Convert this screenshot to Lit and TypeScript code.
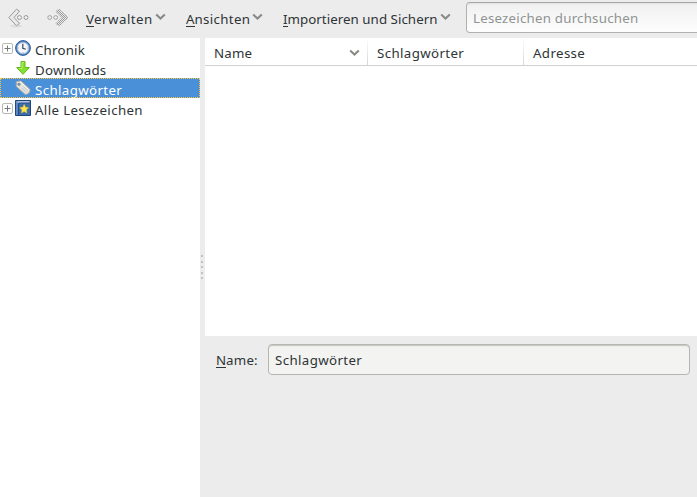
import { LitElement, html, svg, css } from "lit";
import { customElement } from "lit/decorators.js";

const chevron = html`<svg class="chevron" width="11" height="8" viewBox="0 0 11 8">
  <path d="M1.2 1.6 L5.5 5.6 L9.8 1.6" fill="none" stroke="#888a85" stroke-width="2.1" />
</svg>`;

const expander = html`<svg width="11" height="11" viewBox="0 0 11 11">
  <rect x=".5" y=".5" width="10" height="10" rx="1.5" fill="#fff" stroke="#b8b8b4" />
  <path d="M2.5 5.5h6M5.5 2.5v6" stroke="#74787a" />
</svg>`;

const clock = svg`
  <circle cx="8" cy="8" r="7.4" fill="#5b8bc8" stroke="#2f5b98" />
  <circle cx="8" cy="8" r="5.6" fill="#f6f7f8" stroke="#a9c0dd" stroke-width=".8" />
  <path d="M7.8 4v4.3l3 1" fill="none" stroke="#33455e" stroke-width="1.2" />
  <path d="M8 3v1M8 12v1M3 8h1M12 8h1" stroke="#a0a4a8" stroke-width=".8" />`;

const download = svg`
  <path d="M6 1.5h4v6h4.3L8 14.3 1.7 7.5H6z" fill="#86e02b" stroke="#62b81f" stroke-linejoin="round" />
  <path d="M7 2.5v6H4.2M7 2.5h2" fill="none" stroke="#b7f377" stroke-width=".9" />`;

const tag = svg`
  <path d="M1.4 1.6 L6 1 L14.8 9.2 Q15.6 10.8 14 12.8 Q12 14.9 10.2 14.4 L1.2 6.4z"
    fill="#e2e2df" stroke="#a9a9a3" stroke-linejoin="round" />
  <path d="M2.5 2.6 L5.7 2.1 L13.7 9.8" fill="none" stroke="#fafaf8" />
  <circle cx="4" cy="4.2" r="1.3" fill="#6f8fae" stroke="#8b8b84" stroke-width=".6" />
  <path d="M6.8 8l4.4 4M8.4 6.6l4.3 3.9" stroke="#c4c4bf" stroke-width=".9" />`;

const book = svg`
  <path d="M.5 .5h15v15H.5z" fill="#3b6cab" stroke="#1f4579" />
  <path d="M1.5 2h13" stroke="#dfe6ef" stroke-width="1.4" />
  <path d="M2 1v14" stroke="#6d97cc" stroke-width="1.4" />
  <path d="M3.5 3v12" stroke="#204a87" />
  <path d="M4 3h11" stroke="#204a87" stroke-width=".8" />
  <path d="M9.2 4.6l1.3 2.7 3 .4-2.2 2.1.5 3-2.6-1.4-2.6 1.4.5-3-2.2-2.1 3-.4z"
    fill="#fce94f" stroke="#eec32b" stroke-width=".7" />`;

const tree = [
  { label: "Chronik", icon: clock, open: true, cls: "t-short" },
  { label: "Downloads", icon: download, open: false, cls: "t-short" },
  { label: "Schlagwörter", icon: tag, open: false, selected: true, cls: "t-wide" },
  { label: "Alle Lesezeichen", icon: book, open: true, cls: "t-wide" },
];

@customElement("app-root")
export class AppRoot extends LitElement {
  static styles = css`
    :host {
      display: flex;
      flex-direction: column;
      height: 497px;
      overflow: hidden;
      background: #ececec;
      color: #2e3436;
      font: 13.3px/20px "Noto Sans", "Open Sans", sans-serif;
      white-space: nowrap;
    }
    * { box-sizing: border-box; }
    svg { display: block; flex: none; }
    .t-short { letter-spacing: .2px; }
    .t-wide { letter-spacing: .37px; }
    .t-verw { letter-spacing: .5px; }
    .t-ans { letter-spacing: .33px; }
    .t-imp { letter-spacing: .05px; }
    .t-search { letter-spacing: .22px; }
    .toolbar { height: 38px; flex: none; display: flex; align-items: flex-start; padding-left: 8px; }
    .nav { margin-top: 7px; width: 22px; height: 22px; }
    .nav.forward { margin-left: 17px; }
    .menu { display: flex; flex: none; margin-top: 9px; height: 20px; }
    .menu .chevron { margin: 4px 0 0 2px; }
    .m1 { margin-left: 17px; width: 100px; }
    .m2 { width: 97px; }
    .m3 { width: 183px; }
    .key { display: inline-block; height: 18px; border-bottom: 1px solid #2e3436; line-height: 20px; letter-spacing: 0; }
    .search {
      margin-top: 2px; width: 240px; height: 31px; flex: none;
      border: 1px solid #b0b2ae; border-top-color: #a5a7a3; border-radius: 4px;
      background: linear-gradient(#dedede, #f1f1f1 2px, #fdfdfd 90%);
      color: #8f9492; padding: 5px 6px;
    }
    .main { display: flex; flex: 1; min-height: 0; }
    .tree { width: 200px; background: #fff; flex: none; }
    .row { height: 20px; display: flex; padding-left: 2px; }
    .twist { width: 13px; padding-top: 5px; }
    .row .icon { margin-top: 2px; }
    .row .label { margin: 2px 0 0 4px; }
    .selected { background: #4a90d9; color: #fff; outline: 1px dotted #ffc640; outline-offset: -1px; }
    .splitter { width: 5px; flex: none; display: flex; flex-direction: column; padding: 217px 0 0 1px; gap: 3.5px; }
    .dot { width: 2px; height: 2px; background: #c2c2c2; }
    .content { flex: 1; min-width: 0; }
    .table { height: 298px; background: #fff; }
    .head { height: 28px; border-bottom: 1px solid #d0d0d0; display: flex; }
    .col { padding: 5px 7px 0 9px; border-right: 1px solid #d8d8d8; border-image: linear-gradient(#fff, #d4d4d4) 1; border-width: 0 1px 0 0; display: flex; justify-content: space-between; }
    .col .chevron { margin-top: 6px; }
    .c1 { width: 163px; }
    .c2 { width: 156px; }
    .c3 { flex: 1; border: 0; }
    .form { display: flex; padding: 8px 7px 0 11px; }
    .form .cap { width: 52px; padding-top: 6px; }
    .field {
      flex: 1; height: 31px; border: 1px solid #b4b6b1; border-radius: 4px;
      background: #f3f3f1; box-shadow: inset 0 1px #c9cac5, inset 0 2px #ebebe8; padding: 5px 6px;
    }
  `;

  render() {
    return html`
      <div class="toolbar">
        <svg class="nav" viewBox="0 0 22 22">
          <ellipse cx="8" cy="19" rx="6" ry="1.4" fill="#dcdcdc" />
          <path d="M8.5 2.2 L.8 10.5 L8.5 18.7 L11.5 16.4 L6 10.5 L11.5 4.2z" fill="#e9e9e7" stroke="#9b9b99" stroke-linejoin="round" />
          <circle cx="11.5" cy="10.5" r="2" fill="#eee" stroke="#9b9b99" />
          <circle cx="18" cy="10.5" r="2" fill="#eee" stroke="#9b9b99" />
        </svg>
        <svg class="nav forward" viewBox="0 0 22 22">
          <defs>
            <pattern id="check" width="2" height="2" patternUnits="userSpaceOnUse">
              <rect width="2" height="2" fill="#ececec" />
              <path d="M0 0h1v1H0zM1 1h1v1H1z" fill="#999" />
            </pattern>
          </defs>
          <path d="M12 2 L21 10.5 L12 19 L8.8 16.4 L14.8 10.5 L8.8 4.4z" fill="url(#check)" stroke="#8e8e8e" stroke-width=".8" stroke-dasharray="1 1" />
          <circle cx="2.7" cy="10.5" r="1.9" fill="#eee" stroke="#a0a0a0" />
          <circle cx="8.7" cy="10.5" r="1.9" fill="#eee" stroke="#a0a0a0" />
        </svg>
        <div class="menu m1"><span class="t-verw"><span class="key">V</span>erwalten</span>${chevron}</div>
        <div class="menu m2"><span class="t-ans"><span class="key">A</span>nsichten</span>${chevron}</div>
        <div class="menu m3"><span class="t-imp"><span class="key">I</span>mportieren und Sichern</span>${chevron}</div>
        <div class="search"><span class="t-search">Lesezeichen durchsuchen</span></div>
      </div>
      <div class="main">
        <div class="tree">
          ${tree.map(
            (n) => html`<div class="row ${n.selected ? "selected" : ""}">
              <div class="twist">${n.open ? expander : ""}</div>
              <svg class="icon" width="16" height="16" viewBox="0 0 16 16">${n.icon}</svg>
              <span class="label ${n.cls}">${n.label}</span>
            </div>`
          )}
        </div>
        <div class="splitter">${[0, 1, 2, 3, 4].map(() => html`<div class="dot"></div>`)}</div>
        <div class="content">
          <div class="table">
            <div class="head">
              <div class="col c1"><span class="t-short">Name</span>${chevron}</div>
              <div class="col c2"><span class="t-wide">Schlagwörter</span></div>
              <div class="col c3"><span class="t-wide">Adresse</span></div>
            </div>
          </div>
          <div class="form">
            <span class="cap t-short"><span class="key">N</span>ame:</span>
            <div class="field t-wide">Schlagwörter</div>
          </div>
        </div>
      </div>
    `;
  }
}
